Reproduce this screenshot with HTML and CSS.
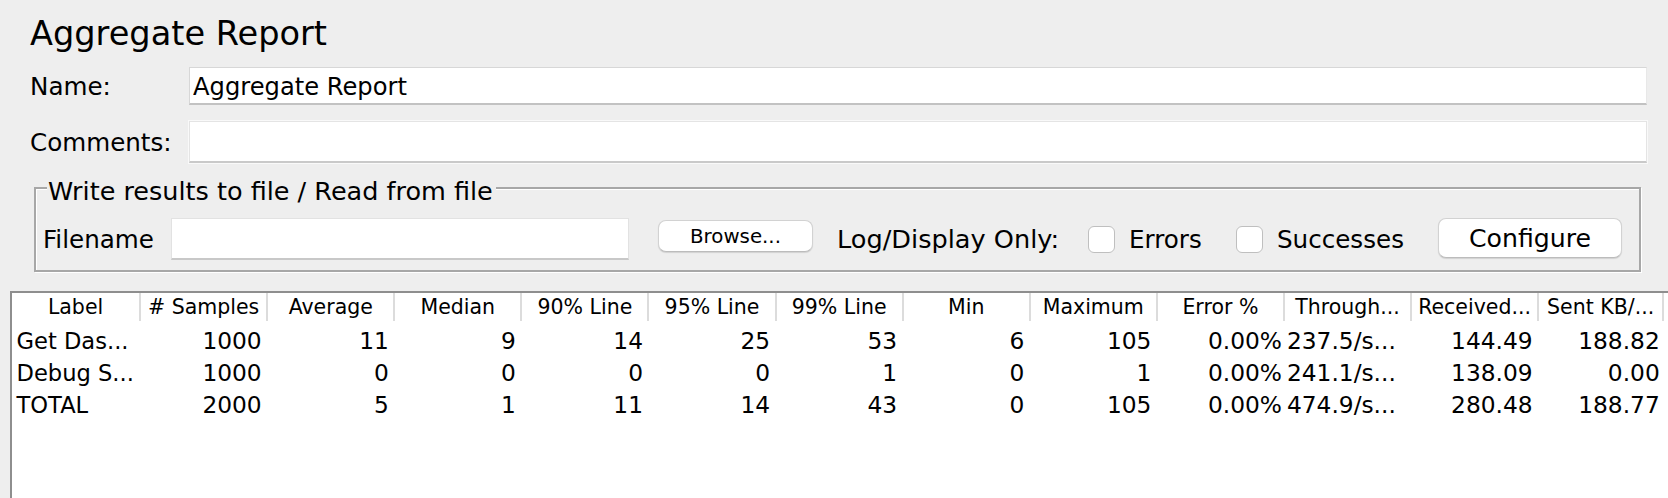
FILE: index.html
```html
<!DOCTYPE html>
<html lang="en">
<head>
<meta charset="utf-8">
<title>Aggregate Report</title>
<link rel="stylesheet" href="styles.css">
</head>
<body>
  <h1 class="title">Aggregate Report</h1>

  <div class="field-row">
    <label class="field-label" for="name">Name:</label>
    <input class="text-field" id="name" type="text" value="Aggregate Report">
  </div>
  <div class="field-row comments-row">
    <label class="field-label" for="comments">Comments:</label>
    <input class="text-field comments-field" id="comments" type="text" value="">
  </div>

  <div class="group">
    <div class="group-title">Write results to file / Read from file</div>
    <div class="file-row">
      <span class="lbl-filename">Filename</span>
      <input class="file-field" type="text" value="">
      <button class="btn btn-browse" type="button">Browse...</button>
      <span class="lbl-log">Log/Display Only:</span>
      <span class="check"></span>
      <span class="lbl-errors">Errors</span>
      <span class="check"></span>
      <span class="lbl-successes">Successes</span>
      <button class="btn btn-configure" type="button">Configure</button>
    </div>
  </div>

  <div class="results">
    <table class="report">
      <thead>
        <tr>
          <th>Label</th><th># Samples</th><th>Average</th><th>Median</th><th>90% Line</th><th>95% Line</th><th>99% Line</th><th>Min</th><th>Maximum</th><th>Error %</th><th>Through...</th><th>Received...</th><th>Sent KB/...</th>
        </tr>
      </thead>
      <tbody>
        <tr>
          <td class="c-label">Get Das...</td><td>1000</td><td>11</td><td>9</td><td>14</td><td>25</td><td>53</td><td>6</td><td>105</td><td class="c-err">0.00%</td><td class="c-tp">237.5/s...</td><td>144.49</td><td>188.82</td>
        </tr>
        <tr>
          <td class="c-label">Debug S...</td><td>1000</td><td>0</td><td>0</td><td>0</td><td>0</td><td>1</td><td>0</td><td>1</td><td class="c-err">0.00%</td><td class="c-tp">241.1/s...</td><td>138.09</td><td>0.00</td>
        </tr>
        <tr>
          <td class="c-label">TOTAL</td><td>2000</td><td>5</td><td>1</td><td>11</td><td>14</td><td>43</td><td>0</td><td>105</td><td class="c-err">0.00%</td><td class="c-tp">474.9/s...</td><td>280.48</td><td>188.77</td>
        </tr>
      </tbody>
    </table>
  </div>
</body>
</html>
```

FILE: styles.css
```css
html, body {
  height: 100%;
}

body {
  margin: 0;
  background: #eeeeee;
  color: #000;
  font-family: "DejaVu Sans", "Liberation Sans", sans-serif;
  font-size: 24.6px;
  display: flex;
  flex-direction: column;
  overflow: hidden;
}

.title {
  margin: 14px 0 0 30px;
  font-size: 33.6px;
  line-height: 40px;
  font-weight: normal;
}

.field-row {
  display: flex;
  align-items: center;
  margin: 13px 21px 0 30px;
}

.comments-row {
  margin-top: 16px;
}

.field-label {
  width: 159px;
  flex: none;
  padding-top: 2px;
  line-height: 30px;
}

.text-field {
  flex: 1;
  min-width: 0;
  height: 38px;
  box-sizing: border-box;
  margin: 0;
  border: 1px solid #d7d7d7;
  border-bottom: 2px solid #c2c2c2;
  border-right-color: #e8e8e8;
  background: #fff;
  font-family: inherit;
  font-size: 24.2px;
  color: #000;
  padding: 3px 3px 0 3px;
  outline: none;
}

.comments-field {
  height: 42px;
  border-color: #e4e4e4;
  border-bottom: 2px solid #c9c9c9;
  box-shadow: 0 0 0 1px #f9f9f9;
}

.group {
  margin: 24px 27px 0 34px;
  border: 2px solid #a7a7a7;
  box-shadow: inset 1px 1px 0 #ffffff, 1px 1px 0 #ffffff;
  padding: 0 0 10px 7px;
}

.group-title {
  width: fit-content;
  margin: -13px 0 0 4px;
  padding: 0 3px 0 1px;
  background: #eeeeee;
  font-size: 25.5px;
  line-height: 30px;
}

.file-row {
  display: flex;
  align-items: center;
  height: 42px;
  margin-top: 12px;
}

.file-row > * {
  flex: none;
}

.lbl-filename {
  width: 128px;
}

.file-field {
  width: 458px;
  height: 42px;
  box-sizing: border-box;
  margin: 0 29px 0 0;
  border: 1px solid #e2e2e2;
  border-bottom: 2px solid #c8c8c8;
  background: #fff;
  outline: none;
}

.btn {
  box-sizing: border-box;
  margin: 0;
  padding: 0;
  background: #fff;
  color: #000;
  font-family: inherit;
  border: 1px solid #d2d2d2;
  border-bottom-color: #bcbcbc;
  border-radius: 8px;
  box-shadow: 0 1px 1px rgba(0, 0, 0, 0.12);
}

.btn-browse {
  width: 155px;
  height: 32px;
  font-size: 19.8px;
  margin: 0 24px 6px 0;
}

.btn-configure {
  width: 184px;
  height: 40px;
  font-size: 25.2px;
  margin-bottom: 2px;
}

.lbl-log {
  width: 251px;
  font-size: 25.6px;
}

.check {
  width: 27px;
  height: 27px;
  box-sizing: border-box;
  border: 1px solid #bfbfbf;
  border-radius: 6px;
  background: #fff;
  margin-right: 14px;
}

.lbl-errors {
  width: 107px;
}

.lbl-successes {
  width: 161px;
}

.results {
  flex: 1;
  margin: 19px 0 0 10px;
  border-top: 2px solid #8e8e8e;
  border-left: 2px solid #8e8e8e;
  background: #fff;
}

.report {
  table-layout: fixed;
  width: 1652px;
  border-collapse: separate;
  border-spacing: 0;
}

.report th {
  width: 127.1px;
  box-sizing: border-box;
  height: 28px;
  padding: 1px 0 0 0;
  font-size: 20.5px;
  line-height: 27px;
  font-weight: normal;
  text-align: center;
  white-space: nowrap;
  overflow: hidden;
}

.report th + th {
  border-left: 2px solid #dcdcdc;
}

.report th:last-child {
  border-right: 2px solid #dcdcdc;
}

.report td {
  padding: 0 4.5px 0 4px;
  font-size: 23.3px;
  line-height: 32px;
  text-align: right;
  white-space: nowrap;
  overflow: hidden;
}

.report tbody tr:first-child td {
  padding-top: 4px;
}

.report td.c-label {
  text-align: left;
  padding-left: 4.5px;
  font-size: 22.6px;
}

.report td.c-err {
  padding-right: 1px;
}

.report td.c-tp {
  text-align: left;
  padding-left: 4px;
  padding-right: 0;
}
```
